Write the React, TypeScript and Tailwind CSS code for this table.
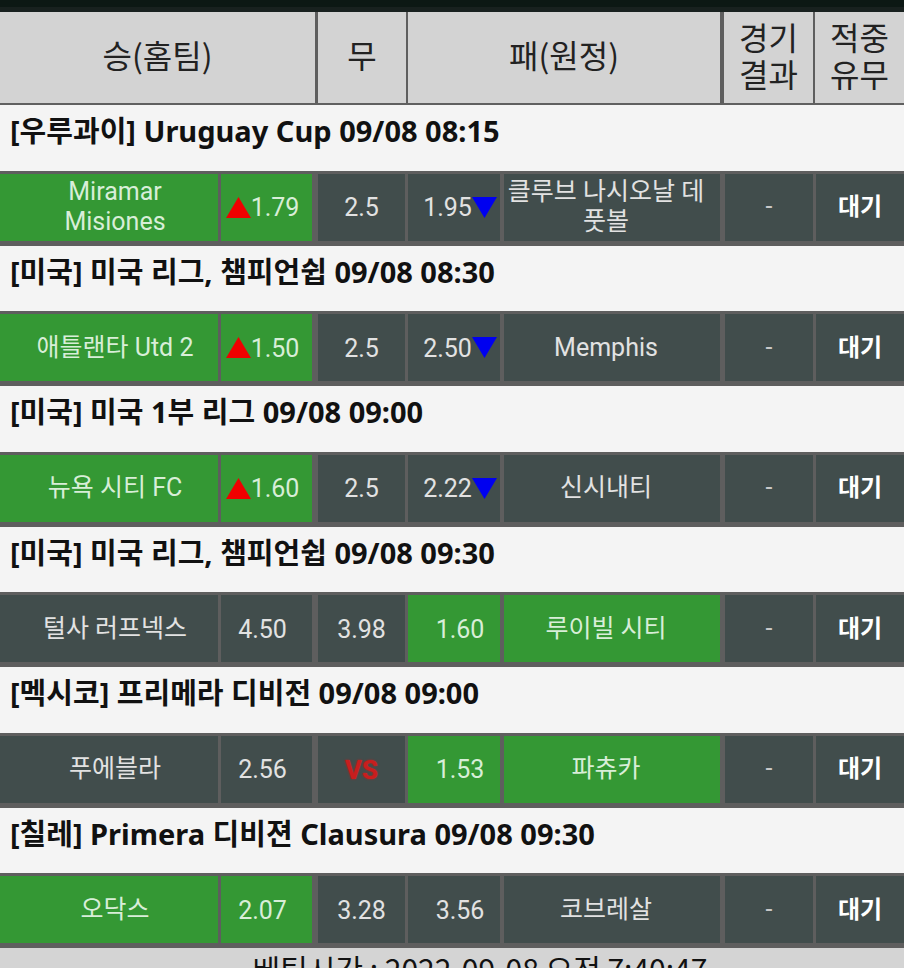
import React from 'react'

type Match = {
  league: string
  home: React.ReactNode
  away: React.ReactNode
  homeOdds: string
  draw: string
  awayOdds: string
  arrows?: boolean
  pick: 'home' | 'away'
}

const matches: Match[] = [
  {
    league: '[우루과이] Uruguay Cup 09/08 08:15',
    home: (
      <>
        Miramar
        <br />
        Misiones
      </>
    ),
    away: (
      <>
        클루브 나시오날 데
        <br />
        풋볼
      </>
    ),
    homeOdds: '1.79',
    draw: '2.5',
    awayOdds: '1.95',
    arrows: true,
    pick: 'home',
  },
  {
    league: '[미국] 미국 리그, 챔피언쉽 09/08 08:30',
    home: '애틀랜타 Utd 2',
    away: 'Memphis',
    homeOdds: '1.50',
    draw: '2.5',
    awayOdds: '2.50',
    arrows: true,
    pick: 'home',
  },
  {
    league: '[미국] 미국 1부 리그 09/08 09:00',
    home: '뉴욕 시티 FC',
    away: '신시내티',
    homeOdds: '1.60',
    draw: '2.5',
    awayOdds: '2.22',
    arrows: true,
    pick: 'home',
  },
  {
    league: '[미국] 미국 리그, 챔피언쉽 09/08 09:30',
    home: '털사 러프넥스',
    away: '루이빌 시티',
    homeOdds: '4.50',
    draw: '3.98',
    awayOdds: '1.60',
    pick: 'away',
  },
  {
    league: '[멕시코] 프리메라 디비전 09/08 09:00',
    home: '푸에블라',
    away: '파츄카',
    homeOdds: '2.56',
    draw: 'VS',
    awayOdds: '1.53',
    pick: 'away',
  },
  {
    league: '[칠레] Primera 디비젼 Clausura 09/08 09:30',
    home: '오닥스',
    away: '코브레살',
    homeOdds: '2.07',
    draw: '3.28',
    awayOdds: '3.56',
    pick: 'home',
  },
]

const UpArrow = () => (
  <svg width="25" height="21" viewBox="0 0 25 21" className="shrink-0">
    <polygon points="12.5,0 25,21 0,21" fill="#f00000" />
  </svg>
)

const DownArrow = () => (
  <svg width="25" height="21" viewBox="0 0 25 21" className="shrink-0">
    <polygon points="0,0 25,0 12.5,21" fill="#0000f0" />
  </svg>
)

function Cell({
  green,
  className,
  children,
}: {
  green?: boolean
  className: string
  children: React.ReactNode
}) {
  return (
    <div
      className={`flex h-[67px] shrink-0 items-center justify-center text-center text-[25px] leading-[30px] ${
        green ? 'bg-[#349834] text-[#d8eed8]' : 'bg-[#414d4c] text-[#e2e2e2]'
      } ${className}`}
    >
      {children}
    </div>
  )
}

function MatchRow({ m }: { m: Match }) {
  const h = m.pick === 'home'
  const a = m.pick === 'away'
  return (
    <div className="flex bg-[#5e5e5e] pb-[5px] pt-[3px]">
      <Cell green={h} className="w-[218px] pl-[12px]">
        <span className="whitespace-nowrap">{m.home}</span>
      </Cell>
      <Cell green={h} className="ml-[3px] w-[91px] pr-[8px]">
        {m.arrows && <UpArrow />}
        <span className="pt-[2px]">{m.homeOdds}</span>
      </Cell>
      <Cell className="ml-[6px] w-[87px]">
        {m.draw === 'VS' ? (
          <span className="pt-[2px] text-[26px] font-bold text-[#c81e1e] [text-shadow:0_0_2px_#c81e1e]">VS</span>
        ) : (
          <span className="pt-[2px]">{m.draw}</span>
        )}
      </Cell>
      <Cell green={a} className="ml-[3px] w-[92px] pl-[12px]">
        <span className="pt-[2px]">{m.awayOdds}</span>
        {m.arrows && <DownArrow />}
      </Cell>
      <Cell green={a} className="ml-[4px] w-[216px] pr-[12px]">
        <span className="whitespace-nowrap">{m.away}</span>
      </Cell>
      <Cell className="ml-[5px] w-[88px]">
        <span className="text-[#c8c8c8]">-</span>
      </Cell>
      <Cell className="ml-[3px] flex-1">
        <span className="text-[24px] font-bold text-white">대기</span>
      </Cell>
    </div>
  )
}

export default function App() {
  return (
    <div
      className="h-[968px] w-[904px] overflow-hidden bg-[#f4f4f4]"
      style={{ fontFamily: 'Roboto, "Noto Sans CJK KR", sans-serif' }}
    >
      <div className="h-[7px] bg-[#0c1814]" />
      <div className="h-[5px] bg-[#18211f]" />

      <div
        className="flex h-[93px] border-b-[2px] border-[#606060] bg-[#5e5e5e] text-[32px] leading-[37px] text-[#222]"
        style={{ fontFamily: '"Noto Sans CJK KR", sans-serif' }}
      >
        <div className="flex w-[315px] items-center justify-center bg-[#d3d3d3] pb-[6px]">승(홈팀)</div>
        <div className="ml-[3px] flex w-[88px] items-center justify-center bg-[#d3d3d3] pb-[6px]">무</div>
        <div className="ml-[2px] flex w-[312px] items-center justify-center bg-[#d3d3d3] pb-[6px]">패(원정)</div>
        <div className="ml-[4px] flex w-[89px] flex-col items-center justify-center bg-[#d3d3d3] pb-[6px] text-center">
          <span>경기</span>
          <span>결과</span>
        </div>
        <div className="ml-[2px] flex flex-1 flex-col items-center justify-center bg-[#d3d3d3] pb-[6px] text-center">
          <span>적중</span>
          <span>유무</span>
        </div>
      </div>

      {matches.map((m, i) => (
        <div key={i}>
          <div
            className="flex h-[65.5px] items-start bg-[#f4f4f4] pl-[10px] pt-[7px] text-[29px] font-bold leading-[38px] text-[#111]"
            style={{ fontFamily: '"Noto Sans", "Noto Sans CJK KR", sans-serif' }}
          >
            {m.league}
          </div>
          <MatchRow m={m} />
        </div>
      ))}

      <div
        className="flex justify-center bg-[#d4d4d4] pl-[56px] pt-[2px] text-[30px] leading-[36px] text-[#111]"
        style={{ fontFamily: '"Noto Sans CJK KR", sans-serif' }}
      >
        베팅시간 : 2022-09-08 오전 7:40:47
      </div>
    </div>
  )
}
